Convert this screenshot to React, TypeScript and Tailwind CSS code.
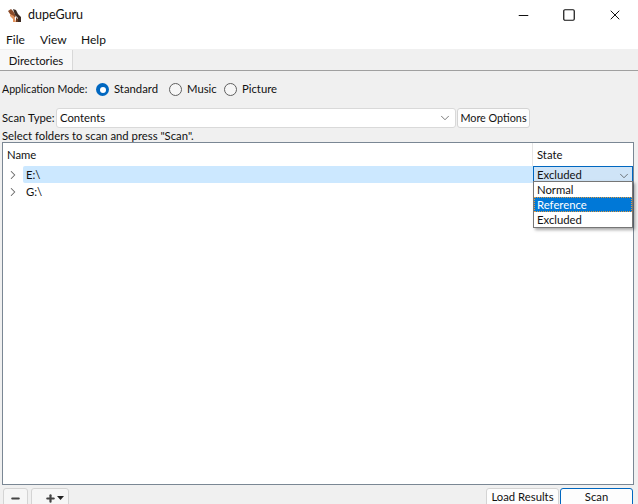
import { Minus, Plus, Square, X, ChevronDown, ChevronRight } from "lucide-react";

const modes = [
  { label: "Standard", checked: true, width: "w-[73px]" },
  { label: "Music", checked: false, width: "w-[55px]" },
  { label: "Picture", checked: false, width: "w-[60px]" },
];

const Radio = ({ label, checked, width }: { label: string; checked: boolean; width: string }) => (
  <div className={`flex items-center gap-[5px] ${width}`}>
    {checked ? (
      <span className="flex h-[13px] w-[13px] items-center justify-center rounded-full bg-[#0067c0]">
        <span className="h-[6px] w-[6px] rounded-full bg-white" />
      </span>
    ) : (
      <span className="h-[13px] w-[13px] rounded-full border border-[#5f5f5f] bg-[#f6f6f6]" />
    )}
    <span>{label}</span>
  </div>
);

const AppLogo = () => (
  <svg width="15" height="15" viewBox="0 0 15 15">
    <path d="M1 3 L4 1 L6 3 L9 8 L7 10 L3 6 Z" fill="#8a4a28" />
    <path d="M3 6 L7 8 L9 14 L6 14 L6 11 L3 8 Z" fill="#e0915c" />
    <path d="M6 1 L9 2 L11 6 L14 9 L14 14 L11 14 L11 10 L8 7 Z" fill="#3b2a22" />
    <path d="M9 9 L11 11 L11 14 L9 14 Z" fill="#6b3a20" />
  </svg>
);

export default function App() {
  return (
    <div className="flex h-[504px] w-[638px] flex-col overflow-hidden bg-[#f0f0f0] font-['Lato','Noto_Sans',sans-serif] text-[11.3px] text-[#111]">
      <div className="flex h-[30px] shrink-0 items-center justify-between bg-white pl-[7px] pr-[15px]">
        <div className="flex items-center gap-[6px]">
          <AppLogo />
          <span className="text-[12.5px]">dupeGuru</span>
        </div>
        <div className="flex items-center gap-[31px]">
          <Minus size={15} strokeWidth={1} absoluteStrokeWidth />
          <Square size={14} strokeWidth={1.2} absoluteStrokeWidth />
          <X size={16} strokeWidth={1} absoluteStrokeWidth />
        </div>
      </div>
      <div className="flex h-[19px] shrink-0 items-center bg-white pl-[6px] pt-[1px] text-[12px]">
        <span className="w-[34px]">File</span>
        <span className="w-[41px]">View</span>
        <span>Help</span>
      </div>
      <div className="flex h-[22px] shrink-0 border-b border-[#a0a0a0]">
        <div className="mt-px flex h-[20px] w-[73px] items-center justify-center border-r border-[#d8d8d8] bg-[#f8f8f8] pt-[2px]">
          Directories
        </div>
      </div>
      <div className="flex h-[37px] shrink-0 items-center pl-[2px]">
        <span className="w-[94px] shrink-0 text-[10.6px]">Application Mode:</span>
        <div className="flex">
          {modes.map((m) => (
            <Radio key={m.label} label={m.label} checked={m.checked} width={m.width} />
          ))}
        </div>
      </div>
      <div className="flex h-[20px] shrink-0 items-center pl-[2px]">
        <span className="w-[54px] shrink-0">Scan Type:</span>
        <div className="flex h-[20px] w-[400px] items-center justify-between rounded-[3px] border border-[#d9d9d9] bg-white pl-[3px] pr-[3px]">
          <span>Contents</span>
          <ChevronDown size={14} strokeWidth={1.2} className="text-[#444]" />
        </div>
        <div className="ml-[1px] flex h-[20px] w-[73px] items-center justify-center whitespace-nowrap rounded-[3px] border border-[#d4d4d4] bg-[#fdfdfd] text-[10.8px]">
          More Options
        </div>
      </div>
      <div className="flex h-[15px] shrink-0 items-center pl-[2px] leading-none">
        Select folders to scan and press "Scan".
      </div>
      <div className="relative ml-[2px] mr-[4px] -mt-px flex h-[343px] shrink-0 flex-col border border-[#7a8794] bg-white">
        <div className="flex h-[23px] shrink-0">
          <div className="flex-1 pl-[4px] pt-[4px]">Name</div>
          <div className="w-[101px] border-l border-[#e5e5e5] pl-[4px] pt-[4px]">State</div>
        </div>
        <div className="flex h-[17px] items-center">
          <ChevronRight size={14} strokeWidth={1.8} className="ml-[3px] text-[#666]" />
          <div className="ml-[3px] flex h-full flex-1 items-center rounded-l-[2px] bg-[#cce8ff] pl-[3px] pt-[1px]">E:\</div>
          <div className="flex h-full w-[100px] items-center justify-between border border-[#0067c0] bg-[#cfe4f7] pl-[3px] pr-[1px] pt-[1px]">
            <span>Excluded</span>
            <ChevronDown size={14} strokeWidth={1.2} className="mt-[2px] text-[#444]" />
          </div>
        </div>
        <div className="flex h-[17px] items-center">
          <ChevronRight size={14} strokeWidth={1.8} className="ml-[3px] text-[#666]" />
          <div className="ml-[3px] pl-[3px] pt-[1px]">G:\</div>
        </div>
        <div className="absolute right-0 top-[38px] w-[100px] border border-[#767676] bg-white shadow-[2px_2px_3px_rgba(0,0,0,0.35)]">
          <div className="flex h-[15px] items-center pl-[3px] pt-[1px]">Normal</div>
          <div className="flex h-[15px] items-center border border-dotted border-[#e09a3e] bg-[#0078d7] pl-[2px] pt-[1px] text-white">Reference</div>
          <div className="flex h-[15px] items-center pl-[3px] pt-[1px]">Excluded</div>
        </div>
      </div>
      <div className="flex h-[20px] shrink-0 items-start overflow-hidden pl-[3px] pr-[5px] pt-[3px]">
        <div className="flex h-[22px] w-[25px] shrink-0 items-start justify-center rounded-[3px] border border-[#d4d4d4] bg-[#f6f6f6] pt-[4px]">
          <Minus size={11} strokeWidth={2.2} absoluteStrokeWidth className="text-[#444]" />
        </div>
        <div className="ml-[3px] flex h-[22px] w-[38px] shrink-0 items-start justify-end rounded-[3px] border border-[#d4d4d4] bg-[#f6f6f6] pr-[4px] pt-[4px]">
          <Plus size={11} strokeWidth={2.2} absoluteStrokeWidth className="text-[#444]" />
          <svg width="7" height="4" viewBox="0 0 7 4" className="ml-[1px] mt-[3px]">
            <path d="M0 0 H7 L3.5 4 Z" fill="#222" />
          </svg>
        </div>
        <div className="ml-auto flex h-[22px] w-[73px] shrink-0 items-start justify-center whitespace-nowrap rounded-[3px] border border-[#d4d4d4] bg-[#fdfdfd] leading-[15px]">
          Load Results
        </div>
        <div className="ml-[1px] flex h-[22px] w-[73px] shrink-0 items-start justify-center rounded-[3px] border border-[#0067c0] bg-[#fdfdfd] leading-[15px]">
          Scan
        </div>
      </div>
    </div>
  );
}
